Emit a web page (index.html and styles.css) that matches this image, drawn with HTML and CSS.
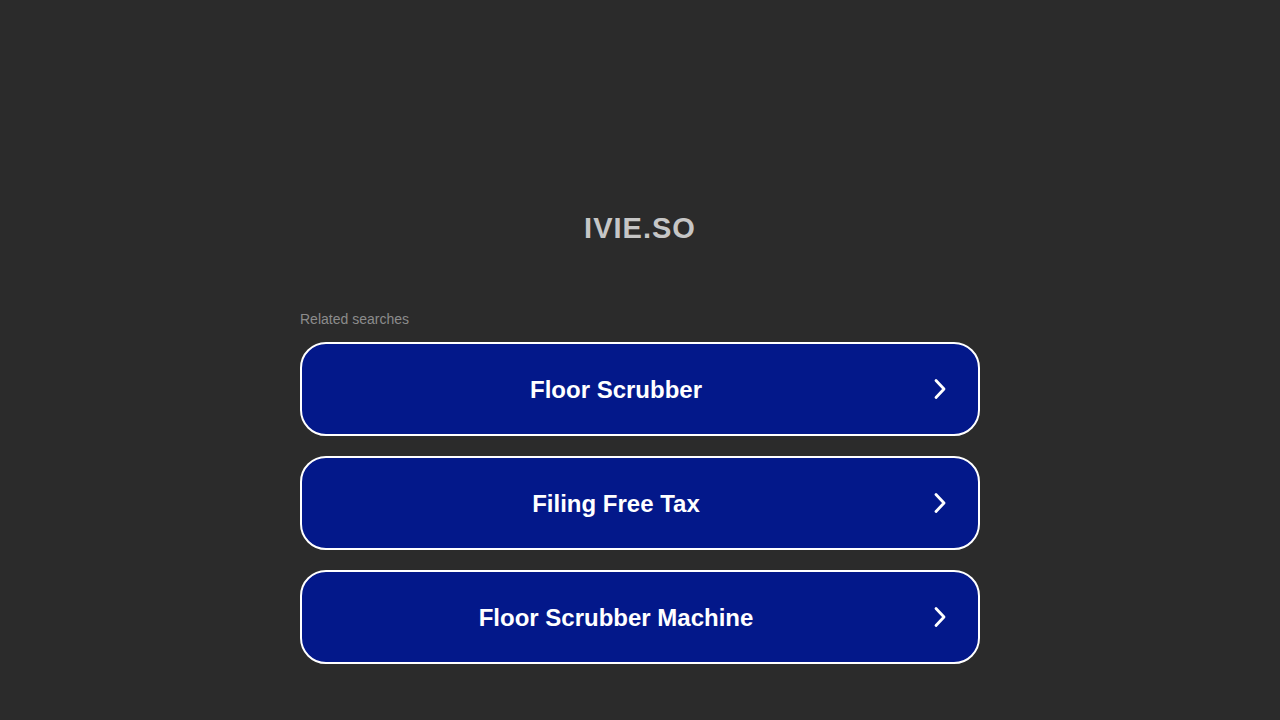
FILE: index.html
```html
<!DOCTYPE html>
<html lang="en">
<head>
  <meta charset="UTF-8" />
  <title>ivie.so</title>
  <link rel="stylesheet" href="styles.css">
</head>
<body>
  <div class="page">
    <h1 class="domain">IVIE.SO</h1>

    <div class="related">
      <p class="related-title">Related searches</p>

      <a class="search-link" href="#">
        <span class="search-text">Floor Scrubber</span>
        <svg class="chevron" viewBox="0 0 16 22" width="16" height="22"><path d="M4 2.5 L12 11 L4 19.5" fill="none" stroke="#fff" stroke-width="2.8" stroke-linecap="round" stroke-linejoin="round"/></svg>
      </a>

      <a class="search-link" href="#">
        <span class="search-text">Filing Free Tax</span>
        <svg class="chevron" viewBox="0 0 16 22" width="16" height="22"><path d="M4 2.5 L12 11 L4 19.5" fill="none" stroke="#fff" stroke-width="2.8" stroke-linecap="round" stroke-linejoin="round"/></svg>
      </a>

      <a class="search-link" href="#">
        <span class="search-text">Floor Scrubber Machine</span>
        <svg class="chevron" viewBox="0 0 16 22" width="16" height="22"><path d="M4 2.5 L12 11 L4 19.5" fill="none" stroke="#fff" stroke-width="2.8" stroke-linecap="round" stroke-linejoin="round"/></svg>
      </a>
    </div>
  </div>
</body>
</html>
```

FILE: styles.css
```css
body {
  margin: 0;
  background: #2b2b2b;
  font-family: 'Liberation Sans', Arial, sans-serif;
}

.page {
  display: flex;
  flex-direction: column;
  align-items: center;
  padding-top: 210px;
}

.domain {
  margin: 0;
  font-size: 29px;
  line-height: 36px;
  font-weight: bold;
  letter-spacing: 1px;
  color: #c6c6c6;
}

.related {
  width: 680px;
  margin-top: 64px;
  display: flex;
  flex-direction: column;
  gap: 20px;
}

.related-title {
  margin: 0 0 -6px;
  font-size: 14px;
  line-height: 18px;
  color: #8c8c8c;
}

.search-link {
  box-sizing: border-box;
  height: 94px;
  display: flex;
  align-items: center;
  padding: 0 30px 0 0;
  border: 2px solid #ffffff;
  border-radius: 26px;
  background: #03188a;
  text-decoration: none;
}

.search-text {
  flex: 1;
  text-align: center;
  font-size: 24px;
  font-weight: bold;
  color: #ffffff;
  padding: 2px 2px 0 0;
}

.chevron {
  display: block;
}
```
